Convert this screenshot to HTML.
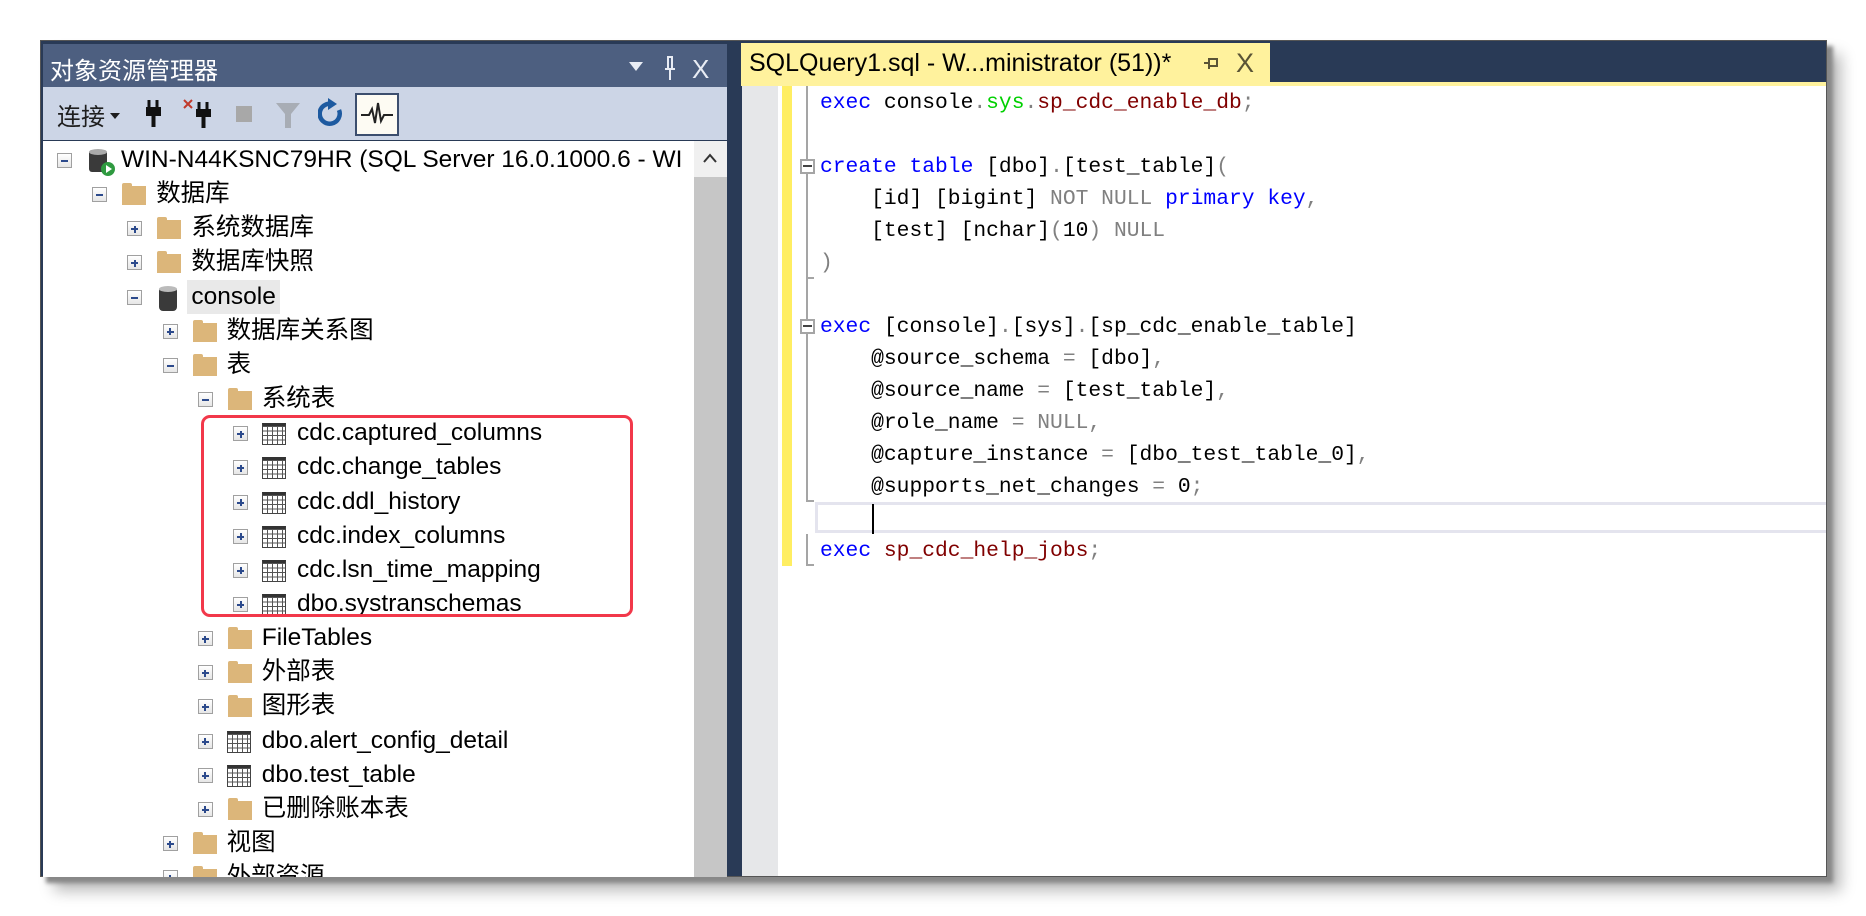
<!DOCTYPE html>
<html><head><meta charset="utf-8"><style>
*{margin:0;padding:0;box-sizing:border-box}
body{width:1866px;height:916px;background:#fff;position:relative;overflow:hidden;font-family:"Liberation Sans","Noto Sans CJK SC",sans-serif}
.abs{position:absolute}
.frame{left:40px;top:40px;width:1787px;height:837px;background:#293a56;border:1px solid #555;box-shadow:6px 6px 4px #888,14px 14px 14px #bbb}
.row{position:absolute;height:34px;line-height:34px;font-size:24.5px;color:#000;white-space:nowrap}
.exp{position:absolute;width:15px;height:15px;border:1px solid #a0a0a0;background:linear-gradient(#fff,#e6e6e6);top:10px}
.exp:before{content:"";position:absolute;left:3px;top:6px;width:7px;height:2px;background:#2c4a8c}
.exp.p:after{content:"";position:absolute;left:5.5px;top:3.5px;width:2px;height:7px;background:#2c4a8c}
.fold{position:absolute;top:6px;width:24px;height:22px}
.fold:before{content:"";position:absolute;left:0;top:0;width:10px;height:5px;background:#dcb67a;border-radius:2px 2px 0 0}
.fold:after{content:"";position:absolute;left:0;top:3px;width:24px;height:19px;background:#dcb67a}
.tbl{position:absolute;top:7px;width:24px;height:22px;border:1px solid #444;border-top:3px solid #333;background:
 repeating-linear-gradient(90deg,transparent 0 4px,#555 4px 5px),repeating-linear-gradient(0deg,transparent 0 3.5px,#555 3.5px 4.5px) #fff}
.txt{position:absolute;top:0}
.code{position:absolute;left:820px;font-family:"Liberation Mono",monospace;font-size:21.3px;line-height:32px;white-space:pre;color:#000}
.k{color:#0000ff}.g{color:#808080}.s{color:#00d000}.r{color:#800000}
</style></head><body>
<div class="abs frame"></div>
<!-- left panel -->
<div class="abs" style="left:43px;top:44px;width:684px;height:43px;background:#4d5f80"></div>
<div class="abs" style="left:50px;top:50px;font-size:24px;color:#fff;line-height:38px;font-family:'Noto Sans CJK SC',sans-serif">对象资源管理器</div>
<div class="abs" style="left:629px;top:62px;width:0;height:0;border-left:7px solid transparent;border-right:7px solid transparent;border-top:9px solid #e8ecf4"></div>
<svg class="abs" style="left:660px;top:54px" width="20" height="30"><path d="M7 3h6M8 3v12M12 3v12M5 15h10M10 15v11" stroke="#e8ecf4" stroke-width="2" fill="none"/></svg>
<div class="abs" style="left:692px;top:51px;font-size:26px;color:#e8ecf4;line-height:36px">X</div>
<div class="abs" style="left:43px;top:87px;width:684px;height:53px;background:#ccd5e6"></div>
<div class="abs" style="left:57px;top:98px;font-size:24px;line-height:34px;color:#1e1e1e;font-family:'Noto Sans CJK SC',sans-serif">连接</div>
<div class="abs" style="left:110px;top:113px;border-left:5px solid transparent;border-right:5px solid transparent;border-top:6px solid #1e1e1e"></div>
<svg class="abs" style="left:144px;top:98px" width="20" height="32"><path d="M5 2v8M13 2v8" stroke="#111" stroke-width="3"/><rect x="2" y="9" width="15" height="9" fill="#111"/><rect x="7.5" y="17" width="4" height="12" fill="#111"/></svg>
<svg class="abs" style="left:182px;top:98px" width="34" height="32"><path d="M2 2l8 8M10 2l-8 8" stroke="#c0392b" stroke-width="2"/><path d="M17 4v8M25 4v8" stroke="#111" stroke-width="3"/><rect x="14" y="11" width="15" height="8" fill="#111"/><rect x="19.5" y="18" width="4" height="12" fill="#111"/></svg>
<div class="abs" style="left:236px;top:106px;width:16px;height:16px;background:#a8a8a8"></div>
<svg class="abs" style="left:275px;top:102px" width="26" height="28"><path d="M1 1h24l-9 11v14h-6V12z" fill="#a8adb5"/></svg>
<svg class="abs" style="left:318px;top:98px" width="28" height="34"><path d="M21 12A10 10 0 1 1 14 6" stroke="#1d5aa0" stroke-width="4.5" fill="none"/><path d="M10 0l9 6-9 6z" fill="#1d5aa0"/></svg>
<div class="abs" style="left:355px;top:93px;width:44px;height:43px;border:2px solid #3c4e6e;background:#fdfbf3"></div>
<svg class="abs" style="left:359px;top:100px" width="36" height="30"><path d="M2 15h8l3-6 3 14 3-20 3 18 3-6h9" stroke="#222" stroke-width="2" fill="none"/></svg>
<!-- tree -->
<div class="abs" style="left:43px;top:141px;width:684px;height:736px;background:#fff"></div>
<div class="abs" style="left:694px;top:141px;width:33px;height:736px;background:#c6c6c6"></div>
<div class="abs" style="left:694px;top:141px;width:33px;height:36px;background:#f0f0f0"></div>
<svg class="abs" style="left:703px;top:153px" width="14" height="10"><path d="M1 9l6-7 6 7" stroke="#333" stroke-width="2" fill="none"/></svg>
<div class="abs" style="left:43px;top:141px;width:651px;height:736px;overflow:hidden">
<div style="position:relative;left:-43px;top:-141px">
<div class="row" style="top:143px;left:57px"><div class="exp" style="left:0"></div>
<svg style="position:absolute;left:30px;top:4px" width="30" height="30"><rect x="2" y="3" width="18" height="22" rx="3" fill="#3a3a3a"/><ellipse cx="11" cy="5" rx="9" ry="3" fill="#aaa"/><circle cx="21" cy="22" r="7" fill="#2f9a40"/><path d="M19 18v8l6-4z" fill="#fff"/></svg>
<span class="txt" style="left:64px">WIN-N44KSNC79HR (SQL Server 16.0.1000.6 - WI</span></div>
</div></div>
<div id="tree"></div>
<div class="abs" style="left:201px;top:415px;width:432px;height:202px;border:3.5px solid #f2384a;border-radius:9px"></div>
<!-- editor -->
<div class="abs" style="left:741px;top:43px;width:529px;height:40px;background:#fff29d"></div>
<div class="abs" style="left:741px;top:82px;width:1085px;height:4px;background:#fff29d"></div>
<div class="abs" style="left:749px;top:44px;font-size:25px;line-height:38px;color:#000">SQLQuery1.sql - W...ministrator (51))*</div>
<svg class="abs" style="left:1203px;top:55px" width="18" height="16"><path d="M1 8h5M6 3v11M6 4h8v7H6" stroke="#5a5436" stroke-width="2" fill="none"/></svg>
<div class="abs" style="left:1236px;top:44px;font-size:27px;line-height:38px;color:#5a5436">X</div>
<div class="abs" style="left:742px;top:86px;width:1084px;height:790px;background:#fff"></div>
<div class="abs" style="left:742px;top:86px;width:36px;height:790px;background:#e6e7e9"></div>
<div class="abs" style="left:782px;top:86px;width:10px;height:480px;background:#ffee62"></div>
<div class="abs" style="left:815px;top:502px;width:1011px;height:31px;border:3px solid #e4e4ee;border-right:none"></div>
<div class="abs" style="left:872px;top:504px;width:2px;height:30px;background:#000"></div>
<!-- outline -->
<div class="abs" style="left:806px;top:86px;width:2px;height:76px;background:#a5a5a5"></div>
<div class="abs" style="left:800px;top:159px;width:15px;height:15px;border:2px solid #a5a5a5;background:#fff"></div><div class="abs" style="left:803px;top:165px;width:9px;height:2px;background:#444"></div>
<div class="abs" style="left:806px;top:174px;width:2px;height:104px;background:#a5a5a5"></div><div class="abs" style="left:806px;top:277px;width:8px;height:2px;background:#a5a5a5"></div>
<div class="abs" style="left:806px;top:279px;width:2px;height:44px;background:#a5a5a5"></div>
<div class="abs" style="left:800px;top:319px;width:15px;height:15px;border:2px solid #a5a5a5;background:#fff"></div><div class="abs" style="left:803px;top:325px;width:9px;height:2px;background:#444"></div>
<div class="abs" style="left:806px;top:334px;width:2px;height:168px;background:#a5a5a5"></div><div class="abs" style="left:806px;top:500px;width:8px;height:2px;background:#a5a5a5"></div>
<div class="abs" style="left:806px;top:534px;width:2px;height:32px;background:#a5a5a5"></div><div class="abs" style="left:806px;top:564px;width:8px;height:2px;background:#a5a5a5"></div>
<div class="code" style="top:87px"><span class="k">exec</span> console<span class="g">.</span><span class="s">sys</span><span class="g">.</span><span class="r">sp_cdc_enable_db</span><span class="g">;</span>

<span class="k">create table</span> [dbo]<span class="g">.</span>[test_table]<span class="g">(</span>
    [id] [bigint] <span class="g">NOT NULL</span> <span class="k">primary key</span><span class="g">,</span>
    [test] [nchar]<span class="g">(</span>10<span class="g">)</span> <span class="g">NULL</span>
<span class="g">)</span>

<span class="k">exec</span> [console]<span class="g">.</span>[sys]<span class="g">.</span>[sp_cdc_enable_table]
    @source_schema <span class="g">=</span> [dbo]<span class="g">,</span>
    @source_name <span class="g">=</span> [test_table]<span class="g">,</span>
    @role_name <span class="g">=</span> <span class="g">NULL,</span>
    @capture_instance <span class="g">=</span> [dbo_test_table_0]<span class="g">,</span>
    @supports_net_changes <span class="g">=</span> 0<span class="g">;</span>

<span class="k">exec</span> <span class="r">sp_cdc_help_jobs</span><span class="g">;</span></div>
<script>
var rows=[[1,'m','f','数据库'],[2,'p','f','系统数据库'],[2,'p','f','数据库快照'],[2,'m','d','console'],[3,'p','f','数据库关系图'],[3,'m','f','表'],[4,'m','f','系统表'],
[5,'p','t','cdc.captured_columns'],[5,'p','t','cdc.change_tables'],[5,'p','t','cdc.ddl_history'],[5,'p','t','cdc.index_columns'],[5,'p','t','cdc.lsn_time_mapping'],[5,'p','t','dbo.systranschemas'],
[4,'p','f','FileTables'],[4,'p','f','外部表'],[4,'p','f','图形表'],[4,'p','t','dbo.alert_config_detail'],[4,'p','t','dbo.test_table'],[4,'p','f','已删除账本表'],[3,'p','f','视图'],[3,'p','f','外部资源']];
var h='';
rows.forEach(function(r,i){
 var x=57+r[0]*35.2, y=143+(i+1)*34.15;
 var ic=r[2]=='f'?'<div class="fold" style="left:30px"></div>':r[2]=='t'?'<div class="tbl" style="left:29px"></div>':'<svg style="position:absolute;left:30px;top:4px" width="24" height="30"><rect x="2" y="3" width="18" height="24" rx="4" fill="#3a3a3a"/><ellipse cx="11" cy="5" rx="9" ry="3" fill="#bbb"/></svg>';
 var bg=r[2]=='d'?'background:#e9e9e9;padding:0 4px;margin-left:-4px;':'';
 h+='<div class="row" style="top:'+y+'px;left:'+x+'px"><div class="exp '+(r[1]=='p'?'p':'')+'" style="left:0"></div>'+ic+'<span class="txt" style="left:64px;'+bg+'">'+r[3]+'</span></div>';
});
var c=document.createElement('div');c.className='abs';c.style.cssText='left:43px;top:141px;width:651px;height:736px;overflow:hidden';
c.innerHTML='<div style="position:relative;left:-43px;top:-141px">'+h+'</div>';
document.getElementById('tree').appendChild(c);
</script>
</body></html>
